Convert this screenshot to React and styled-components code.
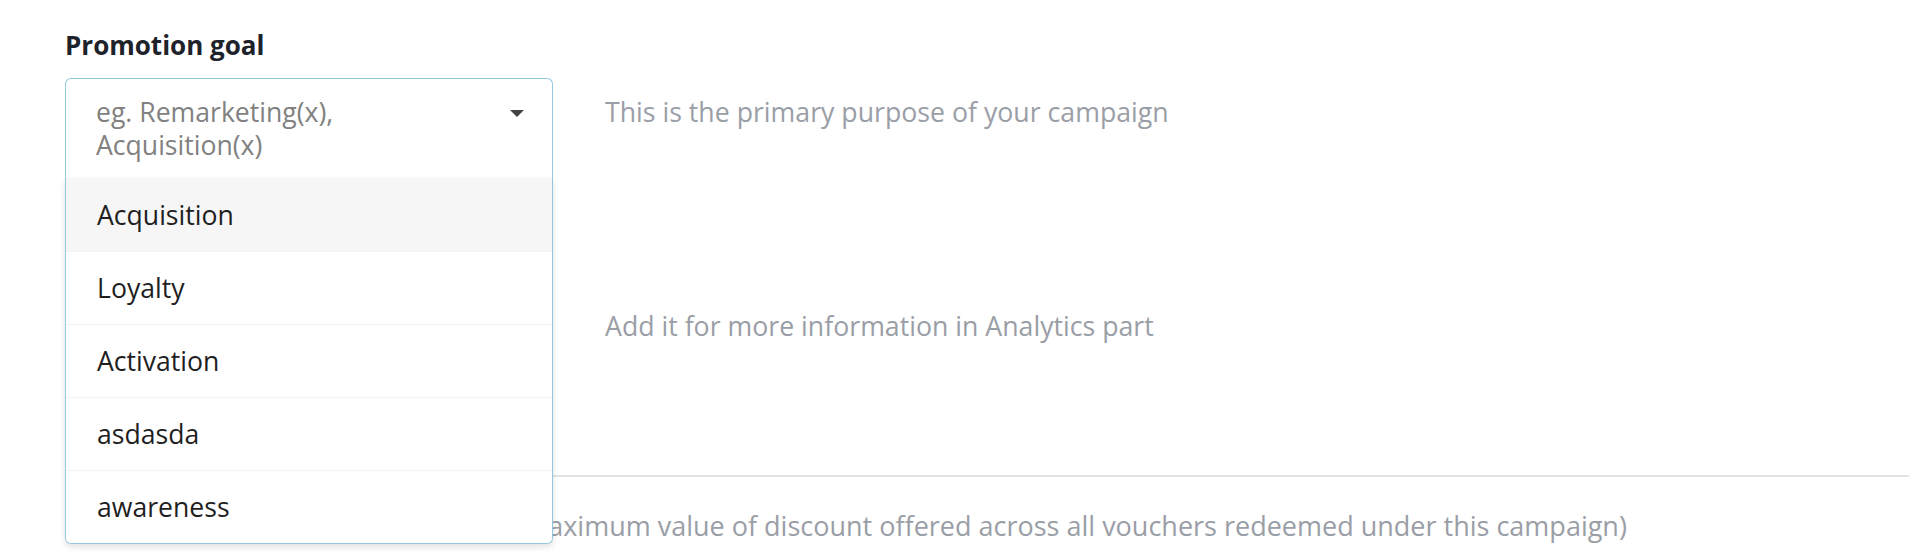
import React from "react";
import styled, { createGlobalStyle } from "styled-components";

const GlobalStyle = createGlobalStyle`
  html, body { margin: 0; padding: 0; background: #ffffff; }
  body { font-family: "Open Sans", "Noto Sans", sans-serif; -webkit-font-smoothing: antialiased; }
  * { box-sizing: border-box; }
`;

const Page = styled.div`
  width: 1909px;
  height: 556px;
  overflow: hidden;
  padding: 29px 0 0 65px;
`;

const Label = styled.div`
  font-size: 26px;
  font-weight: 700;
  line-height: 33px;
  color: #1e222a;
  margin-bottom: 16px;
`;

const Row = styled.div`
  display: grid;
  grid-template-columns: 488px 1fr;
  column-gap: 52px;
  align-items: ${(p) => p.$align || "start"};
`;

const Hint = styled.div`
  font-size: 26.7px;
  line-height: 33px;
  color: #9a9ea6;
  padding-top: ${(p) => p.$top || 0}px;
  white-space: nowrap;
`;

const SelectWrap = styled.div`
  position: relative;
  z-index: 2;
`;

const Control = styled.div`
  display: flex;
  align-items: flex-start;
  justify-content: space-between;
  padding: 17px 28px 16px 30px;
  border: 1px solid #93c8de;
  border-bottom: none;
  border-radius: 6px 6px 0 0;
  background: #fff;
`;

const Placeholder = styled.div`
  font-size: 26.6px;
  line-height: 33px;
  color: #818181;
  width: 330px;
`;

const Caret = styled.span`
  width: 0;
  height: 0;
  margin-top: 14px;
  border-left: 7px solid transparent;
  border-right: 7px solid transparent;
  border-top: 7px solid #444;
`;

const Menu = styled.ul`
  position: absolute;
  top: 100%;
  left: 0;
  right: 0;
  margin: 0;
  padding: 0;
  list-style: none;
  background: #fff;
  border: 1px solid #93c8de;
  border-top: none;
  border-radius: 0 0 6px 6px;
  box-shadow: 0 3px 6px rgba(0, 0, 0, 0.12);
  overflow: hidden;
`;

const Option = styled.li`
  height: 73px;
  display: flex;
  align-items: center;
  padding-left: 31px;
  font-size: 26.6px;
  color: #1f1f1f;
  background: ${(p) => (p.$active ? "#f6f6f6" : "#fff")};
  & + & {
    border-top: 1px solid #f3f3f3;
  }
`;

const Field = styled.div`
  margin-top: ${(p) => p.$top || 0}px;
`;

const Input = styled.div`
  height: 70px;
  border: 1px solid #d9d9d9;
  border-radius: 6px;
`;

const Divider = styled.hr`
  margin: 115px 0 0 0;
  border: none;
  border-top: 2px solid #e4e4e4;
`;

const Note = styled.div`
  margin-top: 32px;
  font-size: 27px;
  line-height: 33px;
  color: #9a9ea6;
  white-space: nowrap;
`;

const options = ["Acquisition", "Loyalty", "Activation", "asdasda", "awareness"];

export default function App() {
  return (
    <>
      <GlobalStyle />
      <Page>
        <Label>Promotion goal</Label>
        <Row>
          <SelectWrap>
            <Control>
              <Placeholder>eg. Remarketing(x), Acquisition(x)</Placeholder>
              <Caret />
            </Control>
            <Menu>
              {options.map((o, i) => (
                <Option key={o} $active={i === 0}>
                  {o}
                </Option>
              ))}
            </Menu>
          </SelectWrap>
          <Hint $top={17}>This is the primary purpose of your campaign</Hint>
        </Row>
        <Field $top={112}>
          <Row $align="center">
            <Input />
            <Hint>Add it for more information in Analytics part</Hint>
          </Row>
        </Field>
        <Divider />
        <Note>Set a total budget for the campaign (maximum value of discount offered across all vouchers redeemed under this campaign)</Note>
      </Page>
    </>
  );
}
